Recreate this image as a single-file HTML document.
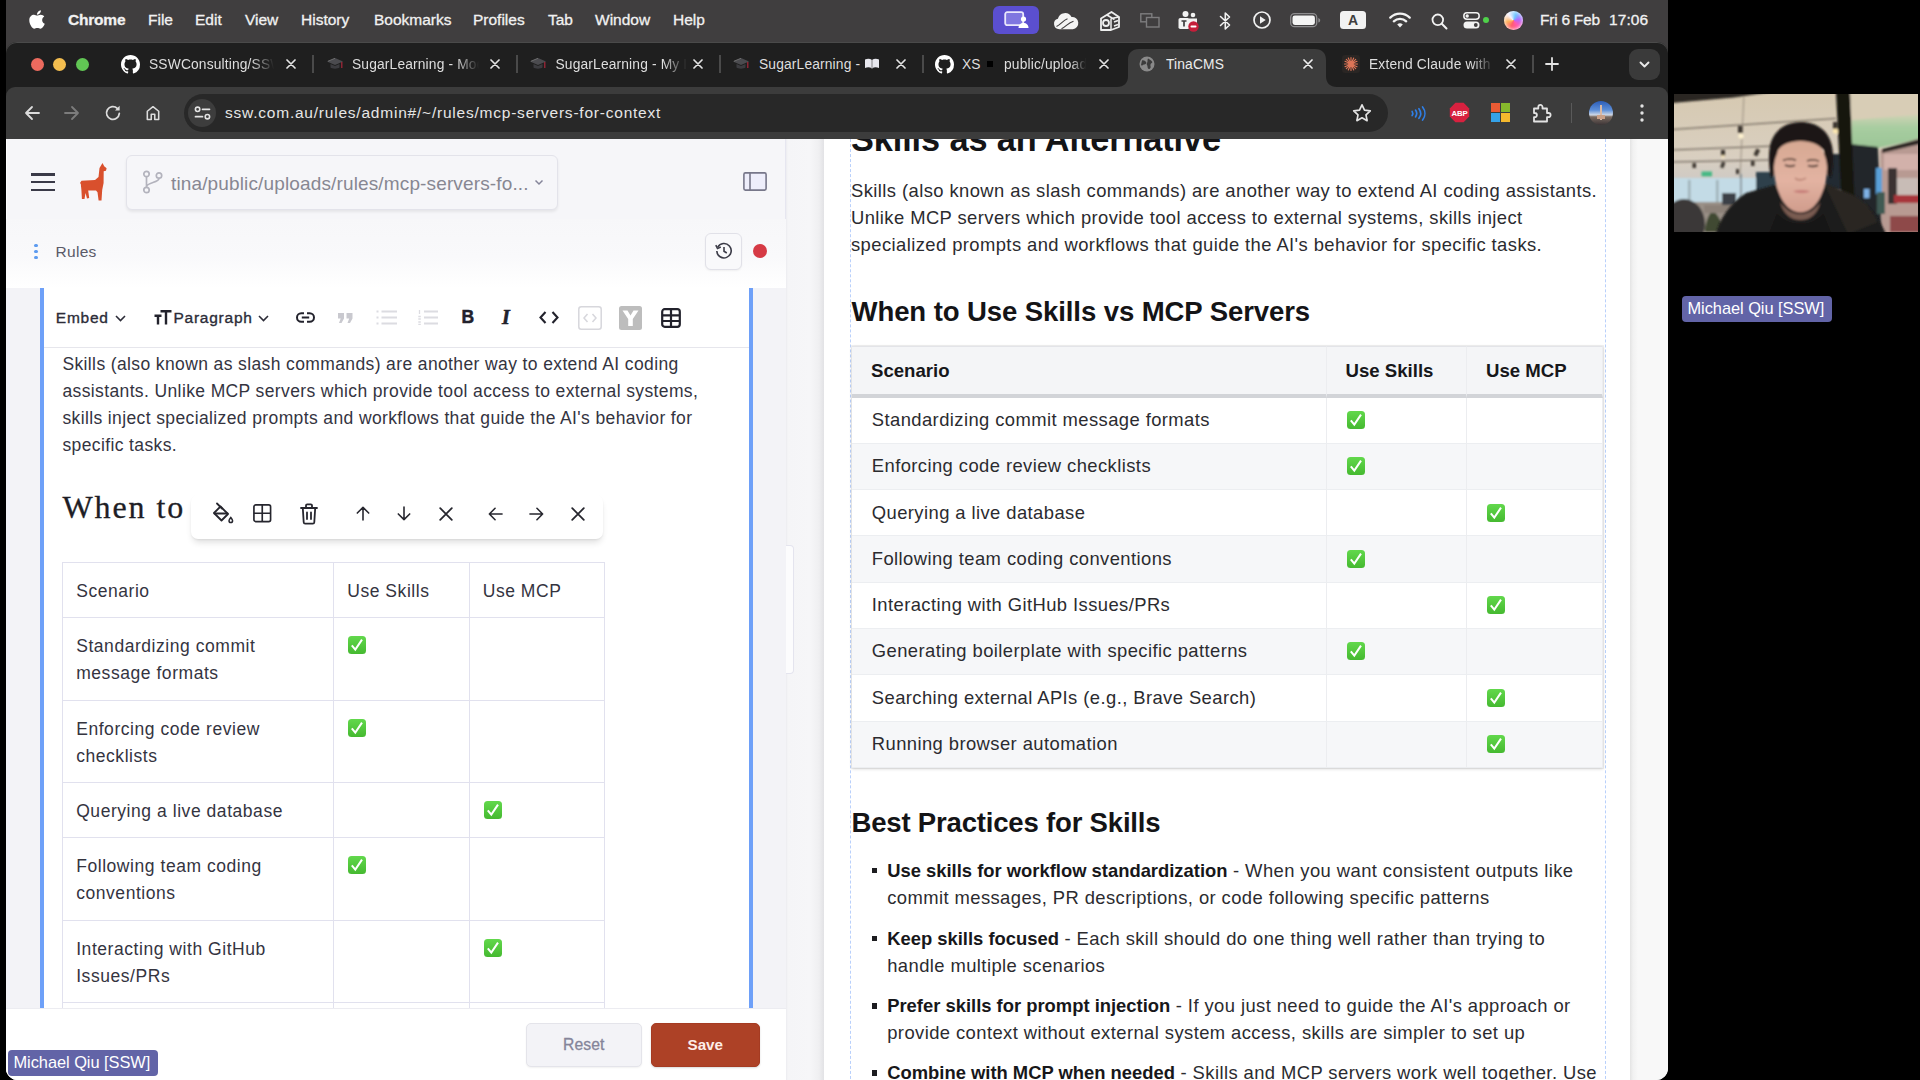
<!DOCTYPE html>
<html lang="en">
<head>
<meta charset="utf-8">
<title>TinaCMS</title>
<style>
*{box-sizing:border-box;margin:0;padding:0}
html,body{width:1920px;height:1080px;overflow:hidden;background:#000}
body{font-family:"Liberation Sans",sans-serif;position:relative;color:#222}
.abs{position:absolute}
svg{display:block}
/* ===== screen share frame ===== */
#share{position:absolute;left:6px;top:0;width:1662px;height:1080px;overflow:hidden;border-radius:0 0 12px 12px;background:#403e3f}
/* ===== mac menu bar ===== */
#menubar{position:absolute;left:0;top:0;width:1662px;height:42px;background:#403e3f;color:#fff}
#menubar .mi{position:absolute;top:10px;font-size:15.5px;line-height:20px;color:#f1f1f1;white-space:nowrap;-webkit-text-stroke:.3px #f1f1f1}
/* ===== chrome window ===== */
#win{position:absolute;left:0;top:42px;width:1662px;height:1038px;border-radius:11px 11px 0 0;overflow:hidden;background:#1f1f1f;box-shadow:inset 0 1px 0 #4e4e4e}
#tabs{position:absolute;left:0;top:0;width:1662px;height:45px;background:#1f1f1f;box-shadow:inset 0 1px 0 #4a4a4a;border-radius:11px 11px 0 0}
#toolbar{position:absolute;left:0;top:45px;width:1662px;height:52px;background:#3c3c3c;border-radius:9px 9px 0 0}
#page{position:absolute;left:0;top:97px;width:1662px;height:941px;background:#f6f6f9;overflow:hidden}
.tt{position:absolute;top:13px;height:19px;line-height:19px;font-size:13.800px;letter-spacing:.15px;white-space:nowrap;overflow:hidden}
/* ===== left panel ===== */
#left{position:absolute;left:0;top:0;width:780px;height:941px;background:#f6f6f9;box-shadow:inset 1px 0 0 #fff,inset -1px 0 0 #e6e6f0}
#gap{position:absolute;left:780px;top:0;width:38px;height:941px;background:linear-gradient(90deg,#ececf0 0,#f5f5f7 2px,#f6f6f8 24px,#efeff1 33px,#e2e2e5 38px)}
#right{position:absolute;left:818px;top:0;width:806px;height:941px;background:#fff;overflow:hidden}
#rgut{position:absolute;left:1624px;top:0;width:38px;height:941px;background:linear-gradient(90deg,#e4e4e4 0,#f1f1f1 3px,#f8f8f8 8px)}

/* ---- left pane ---- */
#left .hdrbox{position:absolute;left:119.500px;top:16px;width:432px;height:55px;border:1px solid #e3e3ea;border-radius:6px;background:#f6f6f9;box-shadow:0 2px 3px rgba(0,0,0,.07)}
#left .branch{position:absolute;left:165px;top:32.500px;font-size:19px;line-height:24px;letter-spacing:.14px;color:#878792;white-space:nowrap}
#rulesrow{position:absolute;left:0;top:80px;width:780px;height:69px;background:linear-gradient(180deg,#f7f7f9 0%,#f9f9fb 55%,#ffffff 100%)}
#edgut{position:absolute;left:0;top:149px;width:780px;height:720px;background:#f3f3f7}
#editor{position:absolute;left:34px;top:149px;width:713px;height:720px;background:#fff;border-left:4px solid #6ea0f8;border-right:4px solid #6ea0f8;overflow:hidden}
#etb{position:absolute;left:0;top:0;width:705px;height:59.500px;border-bottom:1px solid #e6e6ec;background:#fff}
#etb>*{margin-top:1px}
.etxt{position:absolute;top:19px;font-size:15.500px;line-height:20px;letter-spacing:.75px;color:#2c2c38;-webkit-text-stroke:.35px #2c2c38;white-space:nowrap}
.prose{font-size:17.500px;line-height:27px;letter-spacing:.38px;color:#34343f;white-space:nowrap}
#ltable{position:absolute;left:18px;top:274px;border-collapse:collapse;table-layout:fixed;width:543px}
#ltable td{border:1px solid #e1e1ee;padding:15px 14px 0 13.200px;vertical-align:top;font-size:17.500px;line-height:27px;letter-spacing:.55px;color:#34343f;white-space:nowrap}
.chk{display:inline-block;vertical-align:-3.500px}
#ltable tr{height:55px}#ltable tr.r2{height:82.500px}
#ltable .chk{position:relative;top:-1.500px;left:1px}
#ftb{position:absolute;left:147px;top:207px;width:412px;height:43.500px;border-radius:7px;background:#fff;box-shadow:0 5px 7px -2px rgba(0,0,0,.14),0 1px 2px rgba(0,0,0,.05)}
#ftb svg{position:absolute}
#lbottom{position:absolute;left:0;top:869px;width:780px;height:72px;background:#fff;border-top:1px solid #ececf1}
.btn{position:absolute;top:14px;height:44px;border-radius:5px;font-size:15.700px;line-height:42px;text-align:center}

/* ---- right pane ---- */
#dash{position:absolute;left:26px;top:-10px;width:755.500px;height:970px;border-left:1.500px dashed #b9d0fb;border-right:1.500px dashed #b9d0fb}
.rp{position:absolute;left:27px;font-size:18.400px;line-height:27px;letter-spacing:.42px;color:#2b2b2f;white-space:nowrap}
.rp b{letter-spacing:0;color:#17171a}
.rh2{position:absolute;left:27.500px;font-size:27.550px;line-height:34px;font-weight:bold;color:#141416;white-space:nowrap;letter-spacing:-.1px}
#rtable{position:absolute;left:28px;top:206.600px;width:751px;border-collapse:separate;border-spacing:0;table-layout:fixed;box-shadow:0 1px 3px rgba(0,0,0,.16),0 0 0 1px rgba(0,0,0,.05)}
#rtable th{height:52px;background:#f4f5f7;border-bottom:4px solid #d2d4d8;border-top:1.500px solid #e3e4e8;text-align:left;font-size:18.600px;font-weight:bold;color:#17171a;padding:2px 0 0 19px;border-right:1px solid #ecedf0;white-space:nowrap}
#rtable td{height:46.300px;font-size:18.400px;letter-spacing:.42px;color:#2b2b2f;padding:0 0 1.500px 19.800px;border-bottom:1px solid #eceef1;border-right:1px solid #ecedf0;white-space:nowrap;vertical-align:middle;line-height:27px}
#rtable tr:nth-child(odd) td{background:#f6f7f9}
#rtable td .chk{vertical-align:-3px;margin-left:.3px}
.bul{position:absolute;left:47.500px;width:5.500px;height:5.500px;background:#1d1d20}

/* ---- teams overlay ---- */
#cam{position:absolute;left:1674px;top:94px;width:244px;height:138px;overflow:hidden;background:#cfc4b0}
.nm{position:absolute;height:26px;border-radius:4px;background:#6264a7;color:#fff;font-size:16.400px;line-height:25px;white-space:nowrap;padding-left:5.500px;letter-spacing:-.05px}
</style>
</head>
<body>
<div id="share">
  <div id="menubar">
    <svg class="abs" style="left:23px;top:9px" width="16" height="21" viewBox="0 0 384 512"><path fill="#fff" d="M318.7 268.7c-.2-36.7 16.4-64.4 50-84.8-18.8-26.900-47.200-41.700-84.700-44.600-35.500-2.800-74.300 20.700-88.500 20.700-15 0-49.400-19.700-76.400-19.700C63.300 141.200 4 184.800 4 273.500q0 39.300 14.400 81.200c12.800 36.700 59 126.700 107.200 125.200 25.200-.600 43-17.900 75.800-17.900 31.800 0 48.300 17.900 76.400 17.900 48.600-.700 90.400-82.500 102.600-119.300-65.200-30.700-61.700-90-61.700-91.900zm-56.600-164.200c27.300-32.400 24.800-61.900 24-72.500-24.100 1.400-52 16.400-67.900 34.900-17.500 19.800-27.800 44.300-25.600 71.900 26.100 2 49.900-11.400 69.500-34.300z"/></svg>
    <span class="mi" style="left:62px;font-weight:bold;letter-spacing:-.2px">Chrome</span>
    <span class="mi" style="left:142px">File</span>
    <span class="mi" style="left:189px">Edit</span>
    <span class="mi" style="left:239px">View</span>
    <span class="mi" style="left:295px">History</span>
    <span class="mi" style="left:368px">Bookmarks</span>
    <span class="mi" style="left:467px">Profiles</span>
    <span class="mi" style="left:542px">Tab</span>
    <span class="mi" style="left:589px">Window</span>
    <span class="mi" style="left:667px">Help</span>
    <!-- status icons -->
    <div class="abs" style="left:987px;top:6px;width:46px;height:28px;border-radius:6px;background:#5b4fd0"></div>
    <svg class="abs" style="left:998px;top:11px" width="26" height="18" viewBox="0 0 26 18"><rect x="1.2" y="1.2" width="18" height="13" rx="2" fill="#8077e0" stroke="#e9e7fb" stroke-width="1.8"/><circle cx="19.500" cy="8" r="2.600" fill="#fff"/><path d="M14.500 17c0-3 2-5 5-5s5 2 5 5z" fill="#fff"/></svg>
    <svg class="abs" style="left:1047px;top:12px" width="26" height="18" viewBox="0 0 26 18"><path fill="#f4f4f4" d="M6.300 17.200a5.300 5.300 0 0 1-1.400-10.400A7.300 7.300 0 0 1 18.500 5a6.100 6.100 0 0 1 1.300 12.200z"/><path d="M3.500 14.500C8 12.500 10 8.500 14.500 6.800M8.500 16.800C13 14.800 15 10.800 20.500 9.200" stroke="#403e3f" stroke-width="1.150" fill="none"/></svg>
    <svg class="abs" style="left:1093px;top:10px" width="22" height="21" viewBox="0 0 22 21"><path d="M2 8.500 12.500 2 20 7v10l-8 3H2z" fill="none" stroke="#eee" stroke-width="1.800" stroke-linejoin="round"/><circle cx="7" cy="13" r="3" fill="none" stroke="#eee" stroke-width="1.800"/><path d="M12 8.500 20 7M12 8.500V20M8 5l7.500 4.500M15 12l4-1.500M15 16l4-1.500" stroke="#eee" stroke-width="1.500" fill="none"/></svg>
    <svg class="abs" style="left:1134px;top:13px" width="20" height="15" viewBox="0 0 20 15"><rect x=".8" y=".8" width="11" height="8" fill="none" stroke="#7d7c7e" stroke-width="1.400"/><rect x="6.500" y="4.500" width="12.500" height="9.500" fill="#403e3f" stroke="#7d7c7e" stroke-width="1.400"/></svg>
    <svg class="abs" style="left:1171px;top:10px" width="26" height="24" viewBox="0 0 26 24"><circle cx="8.500" cy="4" r="3" fill="#f2f2f2"/><circle cx="16" cy="5" r="2.300" fill="#f2f2f2"/><path d="M12 8.500h8v6a4 4 0 0 1-8 0z" fill="#f2f2f2"/><rect x="1.500" y="8" width="11" height="11" rx="1.800" fill="#f2f2f2"/><path d="M4.500 11h5M7 11v5.500" stroke="#403e3f" stroke-width="1.700"/><circle cx="16.500" cy="16.500" r="5.200" fill="#c41e3a"/><rect x="13.500" y="15.600" width="6" height="1.900" rx=".9" fill="#fff"/></svg>
    <svg class="abs" style="left:1213px;top:11px" width="13" height="20" viewBox="0 0 13 20"><path d="M1.500 5.500 10.500 14 6.300 18V2l4.200 4L1.500 14.500" fill="none" stroke="#f2f2f2" stroke-width="1.600" stroke-linejoin="round" stroke-linecap="round"/></svg>
    <svg class="abs" style="left:1246px;top:10px" width="20" height="20" viewBox="0 0 20 20"><circle cx="10" cy="10" r="8" fill="none" stroke="#f2f2f2" stroke-width="1.700"/><path d="M8 6.300 13.700 10 8 13.700z" fill="#f2f2f2"/></svg>
    <svg class="abs" style="left:1284px;top:13px" width="31" height="15" viewBox="0 0 31 15"><rect x=".7" y=".7" width="26" height="13" rx="3.800" fill="none" stroke="#8d8c8e" stroke-width="1.300"/><rect x="2.500" y="2.500" width="22.400" height="9.400" rx="2.300" fill="#f4f4f4"/><path d="M28.300 5v4.600c1.300-.4 1.900-1.300 1.900-2.300S29.600 5.400 28.300 5z" fill="#8d8c8e"/></svg>
    <div class="abs" style="left:1334px;top:11px;width:26px;height:18px;border-radius:3.500px;background:#f2f2f2;color:#403e3f;font-weight:bold;font-size:14px;line-height:18px;text-align:center">A</div>
    <svg class="abs" style="left:1383px;top:12px" width="22" height="16" viewBox="0 0 22 16"><path d="M1.300 5.600a14 14 0 0 1 19.400 0" fill="none" stroke="#f2f2f2" stroke-width="2.300" stroke-linecap="round"/><path d="M4.800 9.300a9 9 0 0 1 12.400 0" fill="none" stroke="#f2f2f2" stroke-width="2.300" stroke-linecap="round"/><path d="M8.200 12.600a4.200 4.200 0 0 1 5.600 0L11 15.600z" fill="#f2f2f2"/></svg>
    <svg class="abs" style="left:1425px;top:13px" width="17" height="17" viewBox="0 0 17 17"><circle cx="6.800" cy="6.800" r="5.300" fill="none" stroke="#f2f2f2" stroke-width="1.800"/><path d="M10.800 10.800 15.500 15.500" stroke="#f2f2f2" stroke-width="2" stroke-linecap="round"/></svg>
    <svg class="abs" style="left:1457px;top:12px" width="17" height="17" viewBox="0 0 17 17"><rect x=".8" y=".8" width="15.400" height="6.400" rx="3.200" fill="none" stroke="#f2f2f2" stroke-width="1.500"/><circle cx="4.200" cy="4" r="1.700" fill="#f2f2f2"/><rect x=".5" y="9.500" width="16" height="7" rx="3.500" fill="#f2f2f2"/><circle cx="12.800" cy="13" r="1.900" fill="#403e3f"/></svg>
    <div class="abs" style="left:1477px;top:17px;width:6px;height:6px;border-radius:50%;background:#4fd14a"></div>
    <div class="abs" style="left:1498px;top:10.500px;width:19px;height:19px;border-radius:50%;background:conic-gradient(from 200deg,#ff5f6d,#ffb35c,#f7f2ff,#6fc8ff,#b06bff,#ff58b0,#ff5f6d);box-shadow:inset 0 0 3px 1px rgba(255,255,255,.65)"></div>
    <span class="mi" style="left:1534px;letter-spacing:-.25px">Fri 6 Feb</span>
    <span class="mi" style="left:1603px;letter-spacing:.1px">17:06</span>
  </div>
  <div id="win">
    <div id="tabs">
      <div class="abs" style="left:24.500px;top:16px;width:13px;height:13px;border-radius:50%;background:#ec6a5e"></div>
      <div class="abs" style="left:47px;top:16px;width:13px;height:13px;border-radius:50%;background:#f4be4f"></div>
      <div class="abs" style="left:70px;top:16px;width:13px;height:13px;border-radius:50%;background:#61c554"></div>
      <svg class="abs" style="left:115px;top:13px" width="19" height="19" viewBox="0 0 16 16"><path fill="#fff" d="M8 0C3.58 0 0 3.58 0 8c0 3.54 2.29 6.53 5.47 7.59.4.07.55-.17.55-.38 0-.19-.01-.82-.01-1.49-2.010.37-2.530-.49-2.690-.94-.09-.23-.48-.94-.82-1.130-.28-.15-.68-.52-.01-.53.63-.01 1.080.58 1.230.82.72 1.210 1.870.87 2.330.66.07-.52.28-.87.51-1.070-1.780-.2-3.640-.89-3.640-3.950 0-.87.31-1.590.82-2.150-.08-.2-.36-1.020.08-2.120 0 0 .67-.21 2.200.82.64-.18 1.320-.27 2-.27s1.360.09 2 .27c1.530-1.040 2.200-.82 2.200-.82.44 1.100.16 1.920.08 2.120.51.56.82 1.270.82 2.150 0 3.070-1.870 3.750-3.650 3.950.29.25.54.73.54 1.480 0 1.070-.01 1.930-.01 2.200 0 .21.15.46.55.38A8.013 8.013 0 0016 8c0-4.420-3.580-8-8-8z"/></svg>
      <span class="tt" style="left:143px;width:125px;color:#dedede;mask-image:linear-gradient(90deg,#000 82%,transparent 100%);-webkit-mask-image:linear-gradient(90deg,#000 82%,transparent 100%);">SSWConsulting/SSW.Rules.Content</span>
      <svg class="abs" style="left:280px;top:17px" width="10" height="10" viewBox="0 0 10 10"><path d="M1 1l8 8M9 1 1 9" stroke="#e3e3e3" stroke-width="1.700" stroke-linecap="round"/></svg><div class="abs" style="left:306px;top:13px;width:1.500px;height:18px;background:#4a4a4a"></div>
      <svg class="abs" style="left:320px;top:14px" width="18" height="16" viewBox="0 0 18 16"><path d="M1 5.500 9 2l8 3.500L9 9z" fill="#4b4b4f"/><path d="M4.500 8v3.500c1.500 1.500 7.500 1.500 9 0V8L9 10z" fill="#3c3c40"/><path d="M15.800 6v6" stroke="#a8273a" stroke-width="1.200"/><path d="M2 5.200 9 2.300" stroke="#777" stroke-width=".8"/></svg><span class="tt" style="left:346px;width:127px;color:#dedede;mask-image:linear-gradient(90deg,#000 82%,transparent 100%);-webkit-mask-image:linear-gradient(90deg,#000 82%,transparent 100%);">SugarLearning - Modules</span>
      <svg class="abs" style="left:484px;top:17px" width="10" height="10" viewBox="0 0 10 10"><path d="M1 1l8 8M9 1 1 9" stroke="#e3e3e3" stroke-width="1.700" stroke-linecap="round"/></svg><div class="abs" style="left:510px;top:13px;width:1.500px;height:18px;background:#4a4a4a"></div>
      <svg class="abs" style="left:523px;top:14px" width="18" height="16" viewBox="0 0 18 16"><path d="M1 5.500 9 2l8 3.500L9 9z" fill="#4b4b4f"/><path d="M4.500 8v3.500c1.500 1.500 7.500 1.500 9 0V8L9 10z" fill="#3c3c40"/><path d="M15.800 6v6" stroke="#a8273a" stroke-width="1.200"/><path d="M2 5.200 9 2.300" stroke="#777" stroke-width=".8"/></svg><span class="tt" style="left:549.5px;width:131px;color:#dedede;mask-image:linear-gradient(90deg,#000 82%,transparent 100%);-webkit-mask-image:linear-gradient(90deg,#000 82%,transparent 100%);">SugarLearning - My Items</span>
      <svg class="abs" style="left:687px;top:17px" width="10" height="10" viewBox="0 0 10 10"><path d="M1 1l8 8M9 1 1 9" stroke="#e3e3e3" stroke-width="1.700" stroke-linecap="round"/></svg><div class="abs" style="left:713px;top:13px;width:1.500px;height:18px;background:#4a4a4a"></div>
      <svg class="abs" style="left:726px;top:14px" width="18" height="16" viewBox="0 0 18 16"><path d="M1 5.500 9 2l8 3.500L9 9z" fill="#4b4b4f"/><path d="M4.500 8v3.500c1.500 1.500 7.500 1.500 9 0V8L9 10z" fill="#3c3c40"/><path d="M15.800 6v6" stroke="#a8273a" stroke-width="1.200"/><path d="M2 5.200 9 2.300" stroke="#777" stroke-width=".8"/></svg><span class="tt" style="left:753px;width:106px;color:#dedede;">SugarLearning - </span>
      <svg class="abs" style="left:859px;top:16px" width="14" height="11" viewBox="0 0 14 11"><path d="M0 1.500C2.500.500 5 .500 7 2c2-1.500 4.500-1.500 7-.500V10c-2.500-1-5-1-7 .500C5 9 2.500 9 0 10z" fill="#e8e8ee"/><path d="M7 2v8.500" stroke="#777" stroke-width=".9"/></svg>
      <svg class="abs" style="left:890px;top:17px" width="10" height="10" viewBox="0 0 10 10"><path d="M1 1l8 8M9 1 1 9" stroke="#e3e3e3" stroke-width="1.700" stroke-linecap="round"/></svg><div class="abs" style="left:916px;top:13px;width:1.500px;height:18px;background:#4a4a4a"></div>
      <svg class="abs" style="left:928.500px;top:13px" width="19" height="19" viewBox="0 0 16 16"><path fill="#fff" d="M8 0C3.58 0 0 3.58 0 8c0 3.54 2.29 6.53 5.47 7.59.4.07.55-.17.55-.38 0-.19-.01-.82-.01-1.49-2.010.37-2.530-.49-2.690-.94-.09-.23-.48-.94-.82-1.130-.28-.15-.68-.52-.01-.53.63-.01 1.080.58 1.230.82.72 1.210 1.870.87 2.330.66.07-.52.28-.87.51-1.070-1.780-.2-3.640-.89-3.640-3.950 0-.87.31-1.590.82-2.150-.08-.2-.36-1.020.08-2.120 0 0 .67-.21 2.200.82.64-.18 1.320-.27 2-.27s1.360.09 2 .27c1.530-1.040 2.200-.82 2.200-.82.44 1.100.16 1.920.08 2.120.51.56.82 1.270.82 2.150 0 3.070-1.870 3.750-3.650 3.950.29.25.54.73.54 1.480 0 1.070-.01 1.930-.01 2.200 0 .21.15.46.55.38A8.013 8.013 0 0016 8c0-4.420-3.580-8-8-8z"/></svg>
      <span class="tt" style="left:956px;width:24px;color:#dedede;">XS</span>
      <div class="abs" style="left:981px;top:19px;width:6px;height:6px;background:#000"></div>
      <span class="tt" style="left:998px;width:82px;color:#dedede;mask-image:linear-gradient(90deg,#000 82%,transparent 100%);-webkit-mask-image:linear-gradient(90deg,#000 82%,transparent 100%);">public/uploads/rules</span>
      <svg class="abs" style="left:1093px;top:17px" width="10" height="10" viewBox="0 0 10 10"><path d="M1 1l8 8M9 1 1 9" stroke="#e3e3e3" stroke-width="1.700" stroke-linecap="round"/></svg>
      <!-- active tab -->
      <svg class="abs" style="left:1111px;top:6px" width="221" height="39" viewBox="0 0 221 39"><path d="M0 39c7 0 11-4 11-11V12C11 5 15 1 22 1h176c7 0 11 4 11 11v16c0 7 4 11 11 11z" fill="#3c3c3c"/></svg>
      <svg class="abs" style="left:1133px;top:14px" width="16" height="16" viewBox="0 0 16 16"><circle cx="8" cy="8" r="7.500" fill="#8a8a8a"/><path d="M3 4.500c2-.5 3 .5 4 1.500s-.5 2.500-2 2.500S3.500 10.500 2 9zM9 2.500c1 .5 3 1.500 4 3s-1 1.500-1.500 3 1 2.500-.5 4-2.500-.5-2.500-2-1.500-2-.5-3.500S8 4 9 2.500z" fill="#3c3c3c"/></svg>
      <span class="tt" style="left:1160px;width:80px;color:#ececec;">TinaCMS</span>
      <svg class="abs" style="left:1297px;top:17px" width="10" height="10" viewBox="0 0 10 10"><path d="M1 1l8 8M9 1 1 9" stroke="#f0f0f0" stroke-width="1.700" stroke-linecap="round"/></svg>
      <!-- claude tab -->
      <div class="abs" style="left:1336px;top:13px;width:18px;height:18px;border-radius:3px;background:#2a2624"></div>
      <svg class="abs" style="left:1337px;top:14px" width="16" height="16" viewBox="0 0 16 16"><g stroke="#dd7557" stroke-width="1.150" stroke-linecap="round"><path d="M8 1.500v13M1.500 8h13M3.300 3.300l9.400 9.400M12.700 3.300l-9.400 9.400M5.300 2l5.400 12M10.700 2 5.300 14M2 5.300l12 5.400M2 10.700l12-5.400"/></g></svg>
      <span class="tt" style="left:1363px;width:125px;color:#dedede;mask-image:linear-gradient(90deg,#000 82%,transparent 100%);-webkit-mask-image:linear-gradient(90deg,#000 82%,transparent 100%);">Extend Claude with Skills</span>
      <svg class="abs" style="left:1500px;top:17px" width="10" height="10" viewBox="0 0 10 10"><path d="M1 1l8 8M9 1 1 9" stroke="#e3e3e3" stroke-width="1.700" stroke-linecap="round"/></svg><div class="abs" style="left:1526px;top:13px;width:1.500px;height:18px;background:#4a4a4a"></div>
      <svg class="abs" style="left:1539px;top:15px" width="14" height="14" viewBox="0 0 14 14"><path d="M7 1v12M1 7h12" stroke="#e3e3e3" stroke-width="1.800" stroke-linecap="round"/></svg>
      <div class="abs" style="left:1623px;top:7px;width:31px;height:31px;border-radius:9px;background:#3a3a3a"></div>
      <svg class="abs" style="left:1633px;top:18.500px" width="11" height="8" viewBox="0 0 11 8"><path d="M1.500 1.500 5.500 5.500 9.500 1.500" fill="none" stroke="#e8e8e8" stroke-width="1.900" stroke-linecap="round" stroke-linejoin="round"/></svg>
    </div>
    <div id="toolbar">
      <svg class="abs" style="left:18px;top:18px" width="16" height="16" viewBox="0 0 16 16"><path d="M15 8H2M8 2 2 8l6 6" fill="none" stroke="#dcdcdc" stroke-width="1.800" stroke-linecap="round" stroke-linejoin="round"/></svg>
      <svg class="abs" style="left:58px;top:18px" width="16" height="16" viewBox="0 0 16 16"><path d="M1 8h13M8 2l6 6-6 6" fill="none" stroke="#7c7c7c" stroke-width="1.800" stroke-linecap="round" stroke-linejoin="round"/></svg>
      <svg class="abs" style="left:98px;top:17px" width="18" height="18" viewBox="0 0 18 18"><path d="M15.300 9.500A6.400 6.400 0 1 1 13.300 4.300" fill="none" stroke="#dcdcdc" stroke-width="1.800" stroke-linecap="round"/><path d="M15.600 1.800v4.600H11z" fill="#dcdcdc"/></svg>
      <svg class="abs" style="left:140px;top:18px" width="14" height="16" viewBox="0 0 16 18"><path d="M1.500 16.500V7L8 1.800 14.500 7v9.500H10v-6H6v6z" fill="none" stroke="#dcdcdc" stroke-width="1.800" stroke-linejoin="round"/></svg>
      <div class="abs" style="left:178px;top:7px;width:1204px;height:38px;border-radius:19px;background:#282828"></div>
      <div class="abs" style="left:182px;top:12px;width:28px;height:28px;border-radius:50%;background:#3d3d3d"></div>
      <svg class="abs" style="left:187.500px;top:19px" width="17" height="14" viewBox="0 0 17 14"><circle cx="3.600" cy="3.300" r="2.200" fill="none" stroke="#e3e3e3" stroke-width="1.600"/><path d="M8.500 3.300h7" stroke="#e3e3e3" stroke-width="1.700" stroke-linecap="round"/><circle cx="13.400" cy="10.700" r="2.200" fill="none" stroke="#e3e3e3" stroke-width="1.600"/><path d="M1.500 10.700h7" stroke="#e3e3e3" stroke-width="1.700" stroke-linecap="round"/></svg>
      <span class="abs" style="left:219px;top:16px;font-size:15.500px;line-height:20px;letter-spacing:.78px;color:#e6e6e6;white-space:nowrap">ssw.com.au/rules/admin#/~/rules/mcp-servers-for-context</span>
      <svg class="abs" style="left:1346px;top:16px" width="20" height="19" viewBox="0 0 20 19"><path d="M10 1.800l2.500 5.400 5.800.7-4.300 4 1.100 5.800L10 14.800 4.900 17.700 6 11.900 1.700 7.900l5.800-.7z" fill="none" stroke="#e3e3e3" stroke-width="1.700" stroke-linejoin="round"/></svg>
      <!-- extensions -->
      <svg class="abs" style="left:1404px;top:17.500px" width="17" height="17" viewBox="0 0 20 20"><path d="M2.500 7.500c1 1.500 1 3.500 0 5M6.500 6c1.700 2.400 1.700 5.600 0 8M10.500 4.300c2.500 3.400 2.500 8 0 11.400M14.800 2.300c3.600 4.600 3.600 10.800 0 15.400" fill="none" stroke="#2f7fe6" stroke-width="2" stroke-linecap="round"/></svg>
      <svg class="abs" style="left:1443px;top:15px" width="21" height="21" viewBox="0 0 21 21"><path d="M6.400.8h8.200l5.600 5.600v8.200l-5.600 5.600H6.400L.8 14.600V6.400z" fill="#d8213f"/><text x="10.500" y="13.600" text-anchor="middle" font-family="Liberation Sans,sans-serif" font-weight="bold" font-size="7.800" fill="#fff" letter-spacing="-.2">ABP</text></svg>
      <svg class="abs" style="left:1485px;top:16px" width="19" height="19" viewBox="0 0 19 19"><rect width="9" height="9" fill="#ea5b34"/><rect x="10" width="9" height="9" fill="#86b92c"/><rect y="10" width="9" height="9" fill="#35a2e8"/><rect x="10" y="10" width="9" height="9" fill="#f5b92d"/></svg>
      <svg class="abs" style="left:1526px;top:15px" width="20" height="21" viewBox="0 0 20 21"><path d="M2 6.500h4.300V5a2.100 2.100 0 0 1 4.200 0v1.500H15V11h1.500a2.100 2.100 0 0 1 0 4.200H15V19.500H2v-4.300h.8a2.100 2.100 0 0 0 0-4.200H2z" fill="none" stroke="#e3e3e3" stroke-width="1.800" stroke-linejoin="round"/></svg>
      <div class="abs" style="left:1564.500px;top:16px;width:1.500px;height:20px;background:#5a5a5a"></div>
      <div class="abs" style="left:1583px;top:14px;width:24px;height:24px;border-radius:50%;overflow:hidden;background:linear-gradient(180deg,#2c5db8 0%,#5d8fd8 38%,#cfd8e6 58%,#7a6a60 66%,#3b3436 100%)"><div class="abs" style="left:11px;top:4px;width:2px;height:15px;background:#d9b9a6"></div><div class="abs" style="left:8px;top:14px;width:8px;height:4px;background:#c9a088"></div></div>
      <svg class="abs" style="left:1634px;top:16px" width="4" height="20" viewBox="0 0 4 20"><circle cx="2" cy="3" r="1.700" fill="#e3e3e3"/><circle cx="2" cy="10" r="1.700" fill="#e3e3e3"/><circle cx="2" cy="17" r="1.700" fill="#e3e3e3"/></svg>
    </div>
    <div id="page">
      <div id="left">
        <!-- hamburger -->
        <div class="abs" style="left:24.500px;top:34px;width:24.500px;height:2.700px;background:#3a3a48"></div>
        <div class="abs" style="left:24.500px;top:41.800px;width:24.500px;height:2.700px;background:#3a3a48"></div>
        <div class="abs" style="left:24.500px;top:49.600px;width:24.500px;height:2.700px;background:#3a3a48"></div>
        <!-- llama -->
        <svg class="abs" style="left:73.500px;top:23.500px" width="27" height="38" viewBox="0 0 27 38"><path fill="#d9502d" d="M22.500 0l1.700 3.300 2.400 1.900-.6 2.600-2.300.5-.1 11.700-1.400 7-.7 10.500h-2.900l-1.100-8.300-1.500-1.700H8.200l1 7.500-2.200.600-1.500-5.600-1 6h-2.600l-.5-9-.6-6-.8-1 1.500-2.200L15 17l3.500-3 1-9z"/></svg>
        <div class="hdrbox"></div>
        <svg class="abs" style="left:136px;top:31px" width="22" height="24" viewBox="0 0 22 24"><g fill="none" stroke="#b3b3bd" stroke-width="1.700"><circle cx="4.500" cy="4" r="2.700"/><circle cx="4.500" cy="20" r="2.700"/><circle cx="17" cy="5.500" r="2.700"/><path d="M4.500 6.800v10.400M17 8.300c0 5-12.500 3.500-12.500 9"/></g></svg>
        <span class="branch">tina/public/uploads/rules/mcp-servers-fo...</span>
        <svg class="abs" style="left:528px;top:40px" width="10" height="7" viewBox="0 0 10 7"><path d="M1.500 1.500 5 5l3.500-3.500" fill="none" stroke="#85859a" stroke-width="1.500"/></svg>
        <!-- sidebar toggle -->
        <svg class="abs" style="left:736.500px;top:33px" width="24" height="19" viewBox="0 0 24 19"><rect x=".9" y=".9" width="22.200" height="17.200" rx="1.500" fill="#eeeefb" stroke="#77778a" stroke-width="1.600"/><path d="M7 1v17" stroke="#77778a" stroke-width="1.600"/></svg>
        <div id="rulesrow">
          <div class="abs" style="left:28.300px;top:24.500px;width:3.400px;height:3.400px;border-radius:50%;background:#5d9bf0"></div>
          <div class="abs" style="left:28.300px;top:30.800px;width:3.400px;height:3.400px;border-radius:50%;background:#5d9bf0"></div>
          <div class="abs" style="left:28.300px;top:37.100px;width:3.400px;height:3.400px;border-radius:50%;background:#5d9bf0"></div>
          <span class="abs" style="left:49.500px;top:22.700px;font-size:15.500px;line-height:20px;letter-spacing:.3px;color:#5a5a68">Rules</span>
          <div class="abs" style="left:699px;top:14px;width:37px;height:36.500px;border:1px solid #e1e1e8;border-radius:6px;background:#f9f9fb;box-shadow:0 1px 2px rgba(0,0,0,.05)"></div>
          <svg class="abs" style="left:708.500px;top:23px" width="18" height="18" viewBox="0 0 18 18"><path d="M2.700 5.200A7.200 7.200 0 1 1 1.800 9" fill="none" stroke="#3c3c48" stroke-width="1.600"/><path d="M.8 3.200 2.500 6.500 5.800 5" fill="none" stroke="#3c3c48" stroke-width="1.600"/><path d="M9 5v4.300l2.800 1.700" fill="none" stroke="#3c3c48" stroke-width="1.600"/></svg>
          <div class="abs" style="left:746.600px;top:25px;width:14px;height:14px;border-radius:50%;background:#d63a45"></div>
        </div>
        <div id="edgut"></div>
        <div id="editor">
          <div id="etb">
            <span class="etxt" style="left:11.800px">Embed</span>
            <svg class="abs" style="left:71px;top:25.500px" width="11" height="7" viewBox="0 0 11 7"><path d="M1 1l4.500 4.500L10 1" fill="none" stroke="#2c2c38" stroke-width="1.600"/></svg>
            <svg class="abs" style="left:110px;top:20.500px" width="18" height="15" viewBox="0 0 18 15"><path d="M6.500 1.200h11M12 1.200V14.500M.5 5.700h7M4 5.700v8.800" fill="none" stroke="#22222c" stroke-width="2.400"/></svg>
            <span class="etxt" style="left:129.500px">Paragraph</span>
            <svg class="abs" style="left:213.500px;top:25.500px" width="11" height="7" viewBox="0 0 11 7"><path d="M1 1l4.500 4.500L10 1" fill="none" stroke="#2c2c38" stroke-width="1.600"/></svg>
            <!-- link -->
            <svg class="abs" style="left:251.500px;top:22.500px" width="19" height="11" viewBox="0 0 19 11"><path d="M8 1.200H5.300a4.300 4.300 0 0 0 0 8.600H8M11 1.200h2.700a4.300 4.300 0 0 1 0 8.600H11M5.800 5.500h7.400" fill="none" stroke="#22222c" stroke-width="2"/></svg>
            <!-- quote (disabled) -->
            <svg class="abs" style="left:294px;top:24px" width="15" height="10" viewBox="0 0 15 10"><path d="M0 0h6v5.500L3.500 10H1l1.700-4.500H0zM8.500 0h6v5.500L12 10H9.500l1.700-4.500H8.500z" fill="#c9c9cf"/></svg>
            <!-- ul (disabled) -->
            <svg class="abs" style="left:332px;top:20.500px" width="21" height="15" viewBox="0 0 21 15"><g stroke="#dcdce1" stroke-width="1.800"><path d="M5.500 1.500H21M5.500 7.500H21M5.500 13.500H21"/><path d="M.5 1.500h2M.5 7.500h2M.5 13.500h2"/></g></svg>
            <!-- ol (disabled) -->
            <svg class="abs" style="left:373.500px;top:20.500px" width="20" height="15" viewBox="0 0 20 15"><g stroke="#dcdce1" stroke-width="1.800"><path d="M6 1.500h14M6 7.500h14M6 13.500h14"/><path d="M1.500 0v4M.3 6.500h2.500M.3 9h2.500M.3 12h2.500M.3 14.500h2.500" stroke-width="1.300"/></g></svg>
            <!-- B -->
            <span class="abs" style="left:417.500px;top:16px;font-size:17.500px;line-height:24px;font-weight:bold;color:#22222c;-webkit-text-stroke:.5px #22222c">B</span>
            <span class="abs" style="left:458px;top:16px;font-family:'Liberation Serif',serif;font-size:20px;line-height:24px;font-weight:bold;font-style:italic;color:#22222c;-webkit-text-stroke:.6px #22222c">I</span>
            <svg class="abs" style="left:495px;top:21.500px" width="20" height="13" viewBox="0 0 20 13"><path d="M6.500 1 1.500 6.500l5 5.500M13.500 1l5 5.500-5 5.500" fill="none" stroke="#22222c" stroke-width="2.100"/></svg>
            <!-- code block disabled -->
            <svg class="abs" style="left:533.500px;top:17px" width="24" height="24" viewBox="0 0 24 24"><rect x=".8" y=".8" width="22.400" height="22.400" rx="2.500" fill="#fff" stroke="#d7d7dc" stroke-width="1.500"/><path d="M9.500 8 6 12l3.500 4M14.500 8l3.500 4-3.500 4" fill="none" stroke="#d7d7dc" stroke-width="1.500"/></svg>
            <!-- Y box -->
            <svg class="abs" style="left:575px;top:17px" width="23" height="24" viewBox="0 0 23 24"><rect width="23" height="24" rx="2.500" fill="#bdbdbd"/><path d="M3.500 4.500h5l3 5 3-5h5l-5.700 8.500V20h-4.600v-7z" fill="#fff"/></svg>
            <!-- table -->
            <svg class="abs" style="left:617px;top:19px" width="20" height="20" viewBox="0 0 20 20"><rect x="1.200" y="1.200" width="17.600" height="17.600" rx="2.500" fill="none" stroke="#22222c" stroke-width="2.200"/><path d="M1 7.300h18M1 13h18M10 1.500v17" stroke="#22222c" stroke-width="2.200"/></svg>
          </div>
          <div class="abs prose" style="left:18.400px;top:63px">Skills (also known as slash commands) are another way to extend AI coding<br>assistants. Unlike MCP servers which provide tool access to external systems,<br>skills inject specialized prompts and workflows that guide the AI's behavior for<br>specific tasks.</div>
          <div class="abs" style="left:18.500px;top:199px;font-family:'Liberation Serif',serif;font-size:32px;line-height:40px;letter-spacing:1.900px;color:#1e1e26;-webkit-text-stroke:.3px #1e1e26;white-space:nowrap">When to</div>
          <div id="ftb">
            <svg style="left:19.500px;top:7px" width="25" height="25" viewBox="0 0 25 25"><path d="M9.500 4.500 17 12l-6.500 6.500L3 11z" fill="none" stroke="#26262e" stroke-width="1.800" stroke-linejoin="round"/><path d="M6 1.500l5 5M3.500 11.500h13" stroke="#26262e" stroke-width="1.800" fill="none" stroke-linecap="round"/><path d="M19.800 15.500c1.200 1.500 1.800 2.400 1.800 3.200a1.800 1.800 0 0 1-3.600 0c0-.8.600-1.700 1.800-3.200z" fill="none" stroke="#26262e" stroke-width="1.500"/></svg>
            <svg style="left:62px;top:9px" width="18.500" height="18.500" viewBox="0 0 20 20"><rect x="1" y="1" width="18" height="18" rx="2" fill="none" stroke="#26262e" stroke-width="1.800"/><path d="M1 10h18M10 1v18" stroke="#26262e" stroke-width="1.800"/></svg>
            <svg style="left:109px;top:7.500px" width="18" height="22" viewBox="0 0 18 22"><path d="M1 5h16M6 5V2.500A1.200 1.200 0 0 1 7.200 1.300h3.600A1.200 1.200 0 0 1 12 2.500V5M2.800 5l.9 14.200a1.500 1.500 0 0 0 1.500 1.400h7.600a1.500 1.500 0 0 0 1.500-1.400L15.200 5M7 9.500v6.500M11 9.500v6.500" fill="none" stroke="#26262e" stroke-width="1.800" stroke-linecap="round" stroke-linejoin="round"/></svg>
            <svg style="left:164.500px;top:11px" width="14" height="15" viewBox="0 0 16 17"><path d="M8 16V1.500M1.500 8 8 1.500 14.500 8" fill="none" stroke="#26262e" stroke-width="1.800" stroke-linecap="round" stroke-linejoin="round"/></svg>
            <svg style="left:205.500px;top:11px" width="14" height="15" viewBox="0 0 16 17"><path d="M8 1v14.500M1.500 9 8 15.500 14.500 9" fill="none" stroke="#26262e" stroke-width="1.800" stroke-linecap="round" stroke-linejoin="round"/></svg>
            <svg style="left:248px;top:12px" width="14" height="14" viewBox="0 0 14 14"><path d="M1.200 1.200l11.600 11.600M12.800 1.200 1.200 12.800" stroke="#26262e" stroke-width="1.800" stroke-linecap="round"/></svg>
            <svg style="left:296.500px;top:11.500px" width="15" height="14" viewBox="0 0 17 16"><path d="M16 8H1.500M8 1.500 1.500 8 8 14.500" fill="none" stroke="#26262e" stroke-width="1.800" stroke-linecap="round" stroke-linejoin="round"/></svg>
            <svg style="left:337.500px;top:11.500px" width="15" height="14" viewBox="0 0 17 16"><path d="M1 8h14.500M9 1.500 15.500 8 9 14.500" fill="none" stroke="#26262e" stroke-width="1.800" stroke-linecap="round" stroke-linejoin="round"/></svg>
            <svg style="left:380px;top:12px" width="14" height="14" viewBox="0 0 14 14"><path d="M1.200 1.200l11.600 11.600M12.800 1.200 1.200 12.800" stroke="#26262e" stroke-width="1.800" stroke-linecap="round"/></svg>
          </div>
          <table id="ltable">
            <colgroup><col style="width:271px"><col style="width:135.500px"><col style="width:135.500px"></colgroup>
            <tr><td>Scenario</td><td>Use Skills</td><td>Use MCP</td></tr>
            <tr class="r2"><td>Standardizing commit<br>message formats</td><td><svg class="chk" width="18" height="18" viewBox="0 0 18 18"><defs><linearGradient id="g" x1="0" y1="0" x2="0" y2="1"><stop offset="0" stop-color="#62d84c"/><stop offset="1" stop-color="#45b930"/></linearGradient></defs><rect width="18" height="18" rx="3.500" fill="url(#g)"/><path d="M3.800 9.300 7.300 13.600 14 3.600" fill="none" stroke="#fff" stroke-width="2" stroke-linejoin="miter"/></svg></td><td></td></tr>
            <tr class="r2"><td>Enforcing code review<br>checklists</td><td><svg class="chk" width="18" height="18" viewBox="0 0 18 18"><rect width="18" height="18" rx="3.500" fill="url(#g)"/><path d="M3.800 9.300 7.300 13.600 14 3.600" fill="none" stroke="#fff" stroke-width="2" stroke-linejoin="miter"/></svg></td><td></td></tr>
            <tr><td>Querying a live database</td><td></td><td><svg class="chk" width="18" height="18" viewBox="0 0 18 18"><rect width="18" height="18" rx="3.500" fill="url(#g)"/><path d="M3.800 9.300 7.300 13.600 14 3.600" fill="none" stroke="#fff" stroke-width="2" stroke-linejoin="miter"/></svg></td></tr>
            <tr class="r2"><td>Following team coding<br>conventions</td><td><svg class="chk" width="18" height="18" viewBox="0 0 18 18"><rect width="18" height="18" rx="3.500" fill="url(#g)"/><path d="M3.800 9.300 7.300 13.600 14 3.600" fill="none" stroke="#fff" stroke-width="2" stroke-linejoin="miter"/></svg></td><td></td></tr>
            <tr class="r2"><td>Interacting with GitHub<br>Issues/PRs</td><td></td><td><svg class="chk" width="18" height="18" viewBox="0 0 18 18"><rect width="18" height="18" rx="3.500" fill="url(#g)"/><path d="M3.800 9.300 7.300 13.600 14 3.600" fill="none" stroke="#fff" stroke-width="2" stroke-linejoin="miter"/></svg></td></tr>
            <tr class="r2"><td>Generating boilerplate with<br>specific patterns</td><td><svg class="chk" width="18" height="18" viewBox="0 0 18 18"><rect width="18" height="18" rx="3.500" fill="url(#g)"/><path d="M3.800 9.300 7.300 13.600 14 3.600" fill="none" stroke="#fff" stroke-width="2" stroke-linejoin="miter"/></svg></td><td></td></tr>
          </table>
        </div>
        <div id="lbottom">
          <div class="btn" style="left:519.500px;width:116.500px;background:#f3f3f7;border:1px solid #e4e4ea;color:#85859a;-webkit-text-stroke:.3px #85859a;box-shadow:0 1px 2px rgba(0,0,0,.06);letter-spacing:.1px">Reset</div>
          <div class="btn" style="left:645px;width:108.500px;background:#ad4126;border:1px solid #a53b22;color:#fdeee8;font-weight:bold;font-size:15.200px;box-shadow:0 1px 2px rgba(0,0,0,.15)">Save</div>
        </div>
      </div>
      <div id="gap"><div class="abs" style="left:0;top:406px;width:7.500px;height:129px;background:#fcfcfd;border:1px solid #e4e4ee;border-left:none;border-radius:0 4px 4px 0"></div></div>
      <div id="right">
        <div id="dash"></div>
        <div class="abs" style="left:27px;top:-20px;font-size:34.300px;line-height:40px;font-weight:bold;color:#141416;white-space:nowrap;letter-spacing:-.1px">Skills as an Alternative</div>
        <div class="rp" style="top:38px">Skills (also known as slash commands) are another way to extend AI coding assistants.<br>Unlike MCP servers which provide tool access to external systems, skills inject<br>specialized prompts and workflows that guide the AI's behavior for specific tasks.</div>
        <div class="rh2" style="top:155.600px">When to Use Skills vs MCP Servers</div>
        <table id="rtable">
          <colgroup><col style="width:474.600px"><col style="width:140.400px"><col style="width:136px"></colgroup>
          <tr><th>Scenario</th><th>Use Skills</th><th>Use MCP</th></tr>
          <tr><td>Standardizing commit message formats</td><td><svg class="chk" width="18" height="18" viewBox="0 0 18 18"><rect width="18" height="18" rx="3.500" fill="url(#g)"/><path d="M3.800 9.300 7.300 13.600 14 3.600" fill="none" stroke="#fff" stroke-width="2" stroke-linejoin="miter"/></svg></td><td></td></tr><tr><td>Enforcing code review checklists</td><td><svg class="chk" width="18" height="18" viewBox="0 0 18 18"><rect width="18" height="18" rx="3.500" fill="url(#g)"/><path d="M3.800 9.300 7.300 13.600 14 3.600" fill="none" stroke="#fff" stroke-width="2" stroke-linejoin="miter"/></svg></td><td></td></tr><tr><td>Querying a live database</td><td></td><td><svg class="chk" width="18" height="18" viewBox="0 0 18 18"><rect width="18" height="18" rx="3.500" fill="url(#g)"/><path d="M3.800 9.300 7.300 13.600 14 3.600" fill="none" stroke="#fff" stroke-width="2" stroke-linejoin="miter"/></svg></td></tr><tr><td>Following team coding conventions</td><td><svg class="chk" width="18" height="18" viewBox="0 0 18 18"><rect width="18" height="18" rx="3.500" fill="url(#g)"/><path d="M3.800 9.300 7.300 13.600 14 3.600" fill="none" stroke="#fff" stroke-width="2" stroke-linejoin="miter"/></svg></td><td></td></tr><tr><td>Interacting with GitHub Issues/PRs</td><td></td><td><svg class="chk" width="18" height="18" viewBox="0 0 18 18"><rect width="18" height="18" rx="3.500" fill="url(#g)"/><path d="M3.800 9.300 7.300 13.600 14 3.600" fill="none" stroke="#fff" stroke-width="2" stroke-linejoin="miter"/></svg></td></tr><tr><td>Generating boilerplate with specific patterns</td><td><svg class="chk" width="18" height="18" viewBox="0 0 18 18"><rect width="18" height="18" rx="3.500" fill="url(#g)"/><path d="M3.800 9.300 7.300 13.600 14 3.600" fill="none" stroke="#fff" stroke-width="2" stroke-linejoin="miter"/></svg></td><td></td></tr><tr><td>Searching external APIs (e.g., Brave Search)</td><td></td><td><svg class="chk" width="18" height="18" viewBox="0 0 18 18"><rect width="18" height="18" rx="3.500" fill="url(#g)"/><path d="M3.800 9.300 7.300 13.600 14 3.600" fill="none" stroke="#fff" stroke-width="2" stroke-linejoin="miter"/></svg></td></tr><tr><td>Running browser automation</td><td></td><td><svg class="chk" width="18" height="18" viewBox="0 0 18 18"><rect width="18" height="18" rx="3.500" fill="url(#g)"/><path d="M3.800 9.300 7.300 13.600 14 3.600" fill="none" stroke="#fff" stroke-width="2" stroke-linejoin="miter"/></svg></td></tr>
        </table>
        <div class="rh2" style="top:667.300px;letter-spacing:-.2px">Best Practices for Skills</div>
        <div class="bul" style="top:728.500px"></div>
        <div class="rp" style="left:63.200px;top:717.800px"><b>Use skills for workflow standardization</b> - When you want consistent outputs like<br>commit messages, PR descriptions, or code following specific patterns</div>
        <div class="bul" style="top:796.500px"></div>
        <div class="rp" style="left:63.200px;top:785.800px"><b>Keep skills focused</b> - Each skill should do one thing well rather than trying to<br>handle multiple scenarios</div>
        <div class="bul" style="top:864px"></div>
        <div class="rp" style="left:63.200px;top:853.300px"><b>Prefer skills for prompt injection</b> - If you just need to guide the AI's approach or<br>provide context without external system access, skills are simpler to set up</div>
        <div class="bul" style="top:931px"></div>
        <div class="rp" style="left:63.200px;top:920.300px"><b>Combine with MCP when needed</b> - Skills and MCP servers work well together. Use</div>
      </div>
      <div id="rgut"></div>
    </div>
  </div>
</div>
<div id="cam">
<svg width="244" height="138" viewBox="0 0 244 138">
<defs>
<filter id="b1" x="-10%" y="-10%" width="120%" height="120%"><feGaussianBlur stdDeviation="1.1"/></filter>
<filter id="b2" x="-10%" y="-10%" width="120%" height="120%"><feGaussianBlur stdDeviation="2.2"/></filter>
<linearGradient id="ceil" x1="0" y1="0" x2="0" y2="1"><stop offset="0" stop-color="#d6c9b1"/><stop offset=".45" stop-color="#d9cfc0"/><stop offset=".62" stop-color="#cfcac4"/><stop offset="1" stop-color="#b9b4ae"/></linearGradient>
<linearGradient id="skin" x1="0" y1="0" x2="0" y2="1"><stop offset="0" stop-color="#d6a892"/><stop offset=".55" stop-color="#e3b3a2"/><stop offset="1" stop-color="#d09c8c"/></linearGradient>
<linearGradient id="grn" x1="0" y1="0" x2="0" y2="1"><stop offset="0" stop-color="#cfd2b4"/><stop offset=".4" stop-color="#a7cda0"/><stop offset="1" stop-color="#9cc596"/></linearGradient>
</defs>
<rect width="244" height="138" fill="url(#ceil)"/>
<g filter="url(#b1)">
<!-- windows lower-left -->
<rect x="-2" y="84" width="86" height="26" fill="#c3dbe6"/>
<rect x="14" y="86" width="2.500" height="24" fill="#9fb0b6"/><rect x="42" y="86" width="2.500" height="24" fill="#9fb0b6"/><rect x="66" y="80" width="2" height="30" fill="#8d9aa0"/>
<rect x="-2" y="108" width="90" height="32" fill="#9a9087"/>
<rect x="48" y="99" width="14" height="12" fill="#3a4046"/>
<!-- dark wall behind person left -->
<path d="M82 78h24v30H82z" fill="#2f3f4c"/>
<!-- ceiling lines -->
<path d="M-2 35.500 162 24.500M-2 56 100 52M-2 68 95 66" stroke="#5a5148" stroke-width="1" fill="none"/>
<path d="M70 0 66 84" stroke="#8a8072" stroke-width=".8" fill="none"/>
<!-- top dark frame -->
<path d="M-2-2h100L60 3.500-2 9z" fill="#2b2622"/>
<!-- spotlights -->
<g fill="#3a342e"><rect x="64" y="32" width="4.500" height="7"/><rect x="47" y="56" width="4" height="6"/><rect x="81" y="55" width="4" height="7" transform="rotate(25 83 58)"/><rect x="18.500" y="69" width="3.500" height="5"/><rect x="47" y="68" width="3.500" height="6" transform="rotate(20 49 71)"/><rect x="77" y="67" width="3.500" height="5"/><rect x="62" y="75" width="3" height="5"/><rect x="159" y="28" width="4.500" height="7"/></g>
<circle cx="67" cy="42" r="2.600" fill="#fff3cf"/><circle cx="161.500" cy="37" r="2.600" fill="#ffe9b0"/><circle cx="49" cy="62.500" r="1.500" fill="#ffeec0"/>
<!-- exit sign -->
<rect x="27.500" y="77.500" width="10.500" height="5" fill="#45b884"/>
<!-- right: ceiling + green panel -->
<path d="M176-2h70v24l-68 4z" fill="#d8cdb6"/>
<path d="M178 26 246 20.500V45l-42 9-26-2z" fill="url(#grn)"/>
<!-- dark mid-right -->
<path d="M176 50l28 3 4 87h-40z" fill="#24262a"/>
<path d="M150 60h22v36h-22z" fill="#222a32"/>
<!-- glass room far right -->
<path d="M206 56 246 44v96h-38z" fill="#b89a92"/>
<path d="M208 55l38-10v5l-38 9z" fill="#2a2624"/>
<rect x="210" y="60" width="34" height="16" fill="#d2b1aa"/><rect x="222" y="84" width="22" height="20" fill="#c8bcb6"/>
<rect x="214" y="74" width="9" height="36" fill="#3a3030"/>
<rect x="220" y="101" width="26" height="8" fill="#a8343a"/><rect x="216" y="122" width="30" height="16" fill="#8e4a48"/>
<rect x="202" y="74" width="6" height="26" fill="#5aa0d8"/><rect x="203" y="98" width="8" height="22" fill="#3f5a52"/>
<rect x="190" y="95" width="5.500" height="9" fill="#7fb2e6"/>
<!-- pillar -->
<path d="M162-2h14l6 142h-13z" fill="#17140f"/>
<!-- chair + plant -->
<ellipse cx="10" cy="130" rx="21" ry="25" fill="#3b3938"/>
<path d="M31 138c0-10 4-18 8-22 3 4 8 8 12 22z" fill="#3f4a32"/>
<rect x="30" y="111" width="40" height="8" fill="#8c8178"/>
</g>
<!-- person -->
<g filter="url(#b1)">
<path d="M42 140c3-14 14-31 30-41l32-9h48l27 11c16 8 26 24 33 39z" fill="#1d1b1a"/>
<path d="M150 89l30 12c10 6 18 16 24 27l-30 12z" fill="#2a2724"/>
<path d="M97 84c-2-10-3-22-1-32 3-15 15-24 31-24s28 9 31 24c2 10 1 22-1 32l-6-6-1-22c-6-5-14-8-23-8s-17 3-23 8l-1 22z" fill="#1b1613"/>
<path d="M103 60c1-8 11-13 23.500-13s22.500 5 23.500 13c2 4 3 9 3 14 0 9-2 18-5 25-4 11-12 19.500-21.500 19.500s-17.500-8.500-21.500-19.500c-3-7-5-16-5-25 0-5 1-10 3-14z" fill="url(#skin)"/>
<path d="M106 108c5 7 12 12 20.500 12s15-5 20-12c-3 12-10 18-20 18s-17-6-20.500-18z" fill="#c48f7f" opacity=".55"/>
<path d="M103 120c7 7 15 10 23.500 10s16-3 23-10l8 20H95z" fill="#161413"/>
<path d="M109 66.500c4-1.800 9-1.800 13-.3M133 67c4-1.500 9-1.200 12 .3" stroke="#3a2a22" stroke-width="1.500" fill="none"/>
<path d="M111 71c3 1.500 7 1.500 10 .3M134 71.500c3 1.200 7 1 10-.3" stroke="#2a1c18" stroke-width="1.700" fill="none"/>
<path d="M121 84c2 2.500 8 2.500 11 0" stroke="#b88070" stroke-width="1.600" fill="none"/>
<path d="M119 97c4-1.500 12-1.500 17 0-3 3-13 3-17 0z" fill="#c77f7a"/>
</g>
</svg>
</div>
<div class="nm" style="left:1682px;top:296px;width:150px">Michael Qiu [SSW]</div>
<div class="nm" style="left:8px;top:1050px;width:150px">Michael Qiu [SSW]</div>
</body>
</html>
